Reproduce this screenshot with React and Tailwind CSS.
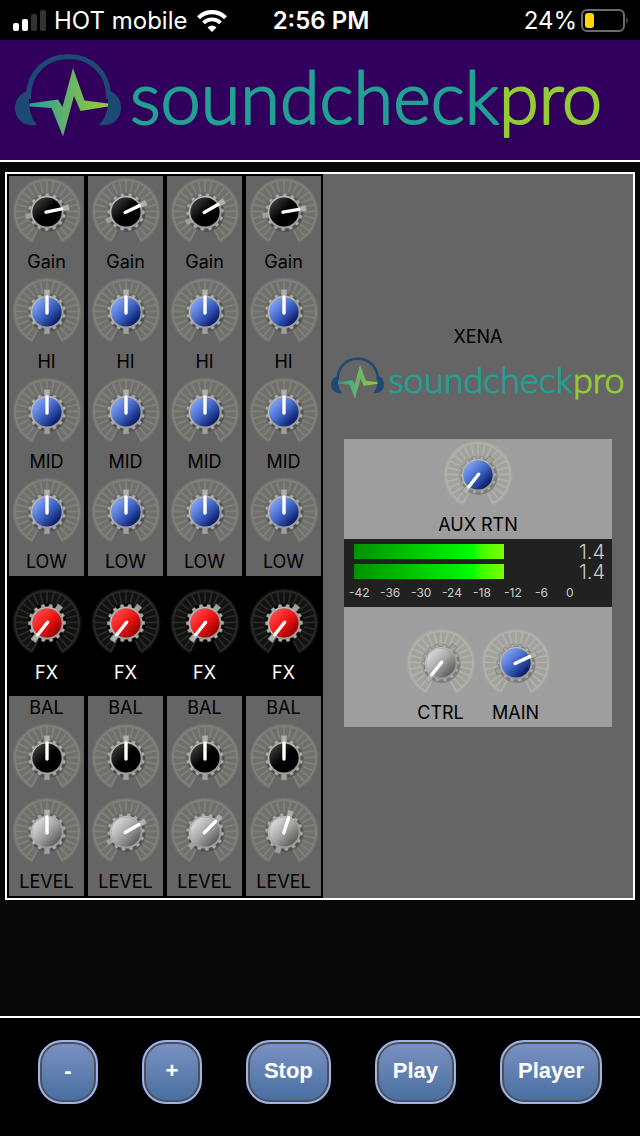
import React, { useState } from 'react';

const CAPS = {
  black: ['#3c3c3c', '#000000', '#000000'],
  blue: ['#86a5fa', '#3f64c4', '#04145e'],
  red: ['#ff4a4a', '#f01414', '#900000'],
  silver: ['#dcdcdc', '#a4a4a4', '#585858'],
};

const DIALS = {
  panel: { fill: '#6f706b', line: '#7f8079' },
  dark: { fill: '#11110f', line: '#292926' },
  light: { fill: '#a1a29b', line: '#b0b1aa' },
};

const BAND = 'M-15.5 29.2A33 33 0 1 1 15.5 29.2L10 18A20.500 20.500 0 1 0 -10 18Z';
const SPOKES = Array.from({ length: 25 }, (_, i) => -152 + i * 12.667);
const TEETH = Array.from({ length: 14 }, (_, i) => (i * 360) / 14);

const channels = [
  { id: 1, gain: 78, level: 0 },
  { id: 2, gain: 65, level: 60 },
  { id: 3, gain: 60, level: 45 },
  { id: 4, gain: 80, level: 18 },
];

const Defs = () => (
  <svg className="absolute h-0 w-0" aria-hidden="true">
    <defs>
      {Object.entries(CAPS).map(([name, stops]) => (
        <linearGradient key={name} id={`cap-${name}`} x1="0.1" y1="0.15" x2="0.85" y2="0.9">
          <stop offset="0" stopColor={stops[0]} />
          <stop offset="0.5" stopColor={stops[1]} />
          <stop offset="1" stopColor={stops[2]} />
        </linearGradient>
      ))}
      <linearGradient id="pulse" x1="0" y1="0" x2="1" y2="0">
        <stop offset="0" stopColor="#22a094" />
        <stop offset="0.5" stopColor="#68b468" />
        <stop offset="1" stopColor="#93cc33" />
      </linearGradient>
    </defs>
  </svg>
);

const Dial = ({ angle, cap, dial }) => {
  const { fill, line } = DIALS[dial];
  return (
    <svg viewBox="-36 -36 72 72" className="h-[72px] w-[72px]" aria-hidden="true">
      <path d={BAND} fill="none" stroke={line} strokeOpacity="0.4" strokeWidth="3" strokeLinejoin="round" />
      <path d={BAND} fill={fill} />
      <path d="M-15 28.300A32 32 0 1 1 15 28.300" fill="none" stroke={line} strokeWidth="2" />
      {SPOKES.map((deg) => (
        <path key={deg} d="M0 -20V-32" stroke={line} strokeWidth="1.800" transform={`rotate(${deg})`} />
      ))}
      <circle cx="1" cy="1.5" r="18.5" fill="#000" fillOpacity="0.2" />
      <g transform={`rotate(${angle})`}>
        {TEETH.map((deg) => (
          <path
            key={deg}
            d="M-2.200 -15L-1.500 -18.800H1.500L2.200 -15Z"
            fill="#adaea9"
            stroke="#7c7d78"
            strokeWidth="0.6"
            strokeLinejoin="round"
            transform={`rotate(${deg})`}
          />
        ))}
        <path d="M-3 -22.500H3L2.500 -14H-2.500Z" fill="#b0b1ac" stroke="#85867f" strokeWidth="0.6" />
        <path d="M-3 22H3L2.500 14H-2.500Z" fill="#a0a19c" stroke="#777871" strokeWidth="0.6" />
      </g>
      <circle r="16.6" fill="#9c9d98" />
      <path d="M-12 10.500A16 16 0 0 1 10.500 -12" fill="none" stroke="#c0c1bc" strokeWidth="1" />
      <circle r="14.600" fill={`url(#cap-${cap})`} />
      <path d="M0 1V-15" stroke="#fff" strokeWidth="3.400" strokeLinecap="round" transform={`rotate(${angle})`} />
    </svg>
  );
};

const Knob = ({ label, name, value, cap, dial = 'panel', top = false, className = '' }) => {
  const [angle, setAngle] = useState(value);
  return (
    <label className={`flex flex-col items-center has-focus-visible:outline ${className}`}>
      {top && <span className="h-[26px] leading-6">{label}</span>}
      <span className="relative">
        <Dial angle={angle} cap={cap} dial={dial} />
        <input
          type="range"
          min="-150"
          max="150"
          value={angle}
          aria-label={name}
          onChange={(e) => setAngle(Number(e.target.value))}
          className="absolute inset-0 h-full w-full cursor-pointer opacity-0"
        />
      </span>
      {!top && <span className="h-7 leading-7">{label}</span>}
    </label>
  );
};

const ChannelStrip = ({ channel }) => (
  <div className="w-[79px] border-2 border-black">
    <Knob label="Gain" name={`Gain ${channel.id}`} value={channel.gain} cap="black" />
    <Knob label="HI" name={`High ${channel.id}`} value={0} cap="blue" />
    <Knob label="MID" name={`Mid ${channel.id}`} value={0} cap="blue" />
    <Knob label="LOW" name={`Low ${channel.id}`} value={0} cap="blue" />
    <Knob label="FX" name={`FX ${channel.id}`} value={-142} cap="red" dial="dark" className="bg-black pt-[11px] pb-[9px] text-white" />
    <Knob label="BAL" name={`Balance ${channel.id}`} value={0} cap="black" top />
    <Knob label="LEVEL" name={`Level ${channel.id}`} value={channel.level} cap="silver" className="pt-[2px]" />
  </div>
);

const Logo = ({ className }) => (
  <svg viewBox="0 0 590 88" className={className} role="img" aria-label="soundcheckpro">
    <path d="M13.500 46V43C13.500 20 31 3.500 53.500 3.500S93.500 20 93.500 43V46" fill="none" stroke="#1d4a74" strokeWidth="5" />
    <path d="M12 38C4 42 0 47 0 55C0 67 10 74 22 72C17 66 14 57 14 48Z" fill="#1d4a74" />
    <path d="M95 38C103 42 106 47 106 55C106 67 96 74 84 72C90 66 93 57 93 48Z" fill="#1d4a74" />
    <path d="M14.500 50.500L43 46.500L47.500 54L58 15L69.500 47.500L93 50.500V53.500L65.500 58L59 43L48 83.500L36.500 55L14.500 53.500Z" fill="url(#pulse)" />
    <g className="font-[Lato,sans-serif] text-[72px] font-light" strokeWidth="2" strokeLinejoin="round">
      <text x="115" y="71" fill="#22a094" stroke="#22a094">
        soundcheck<tspan fill="#93cc33" stroke="#93cc33">pro</tspan>
      </text>
    </g>
  </svg>
);

const StatusBar = () => (
  <div className="grid h-10 grid-cols-[1fr_auto_1fr] items-center bg-black pt-[2px] pr-[11px] pl-[13px] text-2xl text-white">
    <div className="flex items-center">
      <svg viewBox="0 0 33 22" className="h-[22px] w-[33px] shrink-0" aria-hidden="true">
        <rect x="0" y="13" width="6" height="8" rx="2" fill="#fff" />
        <rect x="9" y="9" width="6" height="12" rx="2" fill="#fff" />
        <rect x="18" y="4" width="6" height="17" rx="2" fill="#333" />
        <rect x="27" y="0" width="6" height="21" rx="2" fill="#333" />
      </svg>
      <span className="ml-2 whitespace-nowrap">HOT mobile</span>
      <svg viewBox="0 0 30 22" className="ml-[10px] h-[22px] w-[30px] shrink-0" aria-hidden="true">
        <path d="M1.500 7.700A19 19 0 0 1 28.500 7.700" fill="none" stroke="#fff" strokeWidth="4.200" />
        <path d="M6.500 12.900A12 12 0 0 1 23.500 12.900" fill="none" stroke="#fff" strokeWidth="3.800" />
        <path d="M15 22L10.500 17.500Q15 13.500 19.500 17.500Z" fill="#fff" />
      </svg>
    </div>
    <div className="text-center font-semibold">2:56 PM</div>
    <div className="flex items-center justify-end gap-1">
      <span>24%</span>
      <svg viewBox="0 0 48 24" className="h-6 w-12" aria-hidden="true">
        <rect x="1" y="1" width="42" height="21" rx="5" fill="none" stroke="#6b6b6b" strokeWidth="2" />
        <rect x="4" y="4" width="9" height="15" rx="3" fill="#ffd60a" />
        <path d="M45.500 8Q48 11.500 45.500 15Z" fill="#6b6b6b" />
      </svg>
    </div>
  </div>
);

const MeterRow = ({ value }) => (
  <div className="flex h-5 items-center justify-between">
    <div className="h-[15px] w-[150px] bg-linear-to-r from-[#009200] via-[#00ff00] via-80% to-[#78ff00]"></div>
    <span className="text-xl leading-5 font-light">{value}</span>
  </div>
);

const Meter = () => (
  <div className="h-[68px] bg-[#212121] pt-[3px] text-[#cbcbcb]">
    <div className="pr-[7px] pl-[10px]">
      <MeterRow value="1.4" />
      <MeterRow value="1.4" />
    </div>
    <div className="flex pt-1 pl-[5px] text-xs leading-[14px]">
      {[-42, -36, -30, -24, -18, -12, -6, 0].map((db) => (
        <span key={db} className="w-[31px]">{db}</span>
      ))}
    </div>
  </div>
);

const MasterSection = () => (
  <div className="flex flex-1 flex-col items-center justify-center">
    <p className="leading-6">XENA</p>
    <Logo className="mt-2 w-[295px]" />
    <div className="mt-[38px] mb-[21px] w-[268px] bg-[#9e9e9e]">
      <Knob label="AUX RTN" name="Aux return" value={-142} cap="blue" dial="light" />
      <Meter />
      <div className="flex justify-center gap-[3px] pt-5">
        <Knob label="CTRL" name="Control room" value={-142} cap="silver" dial="light" />
        <Knob label="MAIN" name="Main" value={65} cap="blue" dial="light" />
      </div>
    </div>
  </div>
);

const TransportButton = ({ children }) => (
  <button
    type="button"
    className="h-16 min-w-[60px] rounded-3xl border-2 border-[#9db2ec] bg-linear-to-b from-[#7b92c4] to-[#476e9f] px-4 pb-1 font-[Liberation_Sans,Arial,sans-serif] text-[22px] font-bold text-white inset-ring-2 inset-ring-[#505050]"
  >
    {children}
  </button>
);

const App = () => {
  return (
    <div className="flex min-h-screen flex-col bg-[#080808] font-[Inter,sans-serif]">
      <Defs />
      <StatusBar />
      <header className="border-b-2 border-white bg-[#30005c] px-[15px] pt-[13px] pb-[19px]">
        <Logo className="w-full max-w-[590px]" />
      </header>
      <main className="flex-1 px-[5px] py-[10px]">
        <div className="flex border-2 border-white bg-[#656565] text-lg text-black">
          <div className="flex">
            {channels.map((channel) => (
              <ChannelStrip key={channel.id} channel={channel} />
            ))}
          </div>
          <MasterSection />
        </div>
      </main>
      <footer className="flex justify-center gap-11 border-t-2 border-white bg-black pt-[22px] pb-8">
        <TransportButton>-</TransportButton>
        <TransportButton>+</TransportButton>
        <TransportButton>Stop</TransportButton>
        <TransportButton>Play</TransportButton>
        <TransportButton>Player</TransportButton>
      </footer>
    </div>
  );
};

export default App;
